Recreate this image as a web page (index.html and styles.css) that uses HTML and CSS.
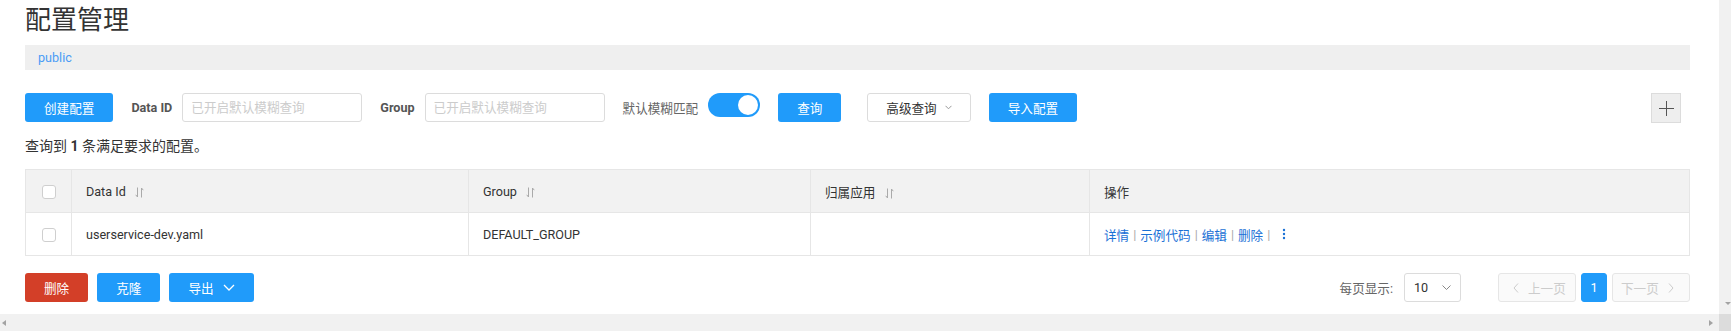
FILE: index.html
```html
<!DOCTYPE html>
<html lang="zh-CN">
<head>
    <meta charset="UTF-8">
    <meta name="viewport" content="width=device-width, initial-scale=1.0">
    <title>配置管理</title>
    <link rel="stylesheet" href="styles.css">
</head>
<body>
    <div class="window">
        <div class="window-main">
            <div class="page">
                <h1 class="page-title">配置管理</h1>
                <div class="namespace-bar">
                    <a class="namespace-link">public</a>
                </div>

                <div class="toolbar">
                    <button class="btn btn-primary toolbar-item">创建配置</button>
                    <div class="form-item toolbar-item">
                        <label class="form-label">Data ID</label>
                        <input class="input" placeholder="已开启默认模糊查询">
                    </div>
                    <div class="form-item toolbar-item">
                        <label class="form-label">Group</label>
                        <input class="input" placeholder="已开启默认模糊查询">
                    </div>
                    <div class="form-item toolbar-item">
                        <span class="form-label form-label-light">默认模糊匹配</span>
                        <div class="switch"><span class="switch-knob"></span></div>
                    </div>
                    <button class="btn btn-primary toolbar-item toolbar-item-wide">查询</button>
                    <button class="btn btn-normal toolbar-item">高级查询
                        <svg class="chevron-small" width="7" height="5" viewBox="0 0 7 5"><path d="M0.5 0.8l3 3 3-3" fill="none" stroke="#999"/></svg>
                    </button>
                    <button class="btn btn-primary toolbar-item">导入配置</button>
                    <div class="add-box">
                        <svg width="15" height="15" viewBox="0 0 15 15"><path d="M7.5 0v15M0 7.5h15" stroke="#555" stroke-width="1"/></svg>
                    </div>
                </div>

                <p class="summary">查询到 <strong>1</strong> 条满足要求的配置。</p>

                <table class="config-table">
                    <colgroup>
                        <col style="width: 46px">
                        <col style="width: 397px">
                        <col style="width: 342px">
                        <col style="width: 279px">
                        <col>
                    </colgroup>
                    <thead>
                        <tr>
                            <th class="cell-check"><span class="checkbox"></span></th>
                            <th>Data Id
                                <svg class="sort-icon" width="9" height="11" viewBox="0 0 9 11"><path d="M2.5 0.5v9.5L0.7 7.8M6.5 10.5V1l1.8 2.2" fill="none" stroke="#aaa"/></svg>
                            </th>
                            <th>Group
                                <svg class="sort-icon" width="9" height="11" viewBox="0 0 9 11"><path d="M2.5 0.5v9.5L0.7 7.8M6.5 10.5V1l1.8 2.2" fill="none" stroke="#aaa"/></svg>
                            </th>
                            <th>归属应用
                                <svg class="sort-icon" width="9" height="11" viewBox="0 0 9 11"><path d="M2.5 0.5v9.5L0.7 7.8M6.5 10.5V1l1.8 2.2" fill="none" stroke="#aaa"/></svg>
                            </th>
                            <th>操作</th>
                        </tr>
                    </thead>
                    <tbody>
                        <tr>
                            <td class="cell-check"><span class="checkbox"></span></td>
                            <td>userservice-dev.yaml</td>
                            <td>DEFAULT_GROUP</td>
                            <td></td>
                            <td>
                                <div class="actions">
                                    <a class="action-link">详情</a><span class="sep">|</span><a class="action-link">示例代码</a><span class="sep">|</span><a class="action-link">编辑</a><span class="sep">|</span><a class="action-link">删除</a><span class="sep">|</span>
                                    <svg class="more-icon" width="4" height="12" viewBox="0 0 4 12"><circle cx="2" cy="2" r="1.2"/><circle cx="2" cy="6" r="1.2"/><circle cx="2" cy="10" r="1.2"/></svg>
                                </div>
                            </td>
                        </tr>
                    </tbody>
                </table>

                <div class="footer-bar">
                    <div class="batch-actions">
                        <button class="btn btn-danger">删除</button>
                        <button class="btn btn-primary">克隆</button>
                        <button class="btn btn-primary btn-export">导出
                            <svg width="12" height="7" viewBox="0 0 12 7"><path d="M1 1l5 5 5-5" fill="none" stroke="#fff" stroke-width="1.3"/></svg>
                        </button>
                    </div>
                    <div class="pagination">
                        <span class="page-size-label">每页显示:</span>
                        <div class="select">
                            <span>10</span>
                            <svg width="9" height="5" viewBox="0 0 9 5"><path d="M0.5 0.5l4 4 4-4" fill="none" stroke="#888"/></svg>
                        </div>
                        <div class="pager">
                            <button class="pager-btn pager-prev" disabled>
                                <svg width="6" height="10" viewBox="0 0 6 10"><path d="M5 0.5L1 5l4 4.5" fill="none" stroke="#ccc"/></svg>
                                <span>上一页</span>
                            </button>
                            <button class="pager-btn pager-current">1</button>
                            <button class="pager-btn pager-next" disabled>
                                <span>下一页</span>
                                <svg width="6" height="10" viewBox="0 0 6 10"><path d="M1 0.5L5 5l-4 4.5" fill="none" stroke="#ccc"/></svg>
                            </button>
                        </div>
                    </div>
                </div>
            </div>
            <div class="v-scroll">
                <span class="arrow-down"></span>
            </div>
        </div>
        <div class="h-scroll-row">
            <div class="h-scroll">
                <span class="arrow-left"></span>
                <span class="arrow-right"></span>
            </div>
            <div class="scroll-corner"></div>
        </div>
    </div>
</body>
</html>
```

FILE: styles.css
```css
:root {
    --primary-color: #209bfa;
    --danger-color: #d33f28;
    --text-color: #333;
    --muted-color: #666;
    --border-color: #dcdcdc;
    --table-border: #e6e6e6;
    --link-color: #1a71d6;
    --scroll-track: #f1f1f1;
}

* {
    margin: 0;
    padding: 0;
    box-sizing: border-box;
}

html,
body {
    width: 100%;
    height: 100%;
    overflow: hidden;
}

body {
    font-family: Roboto, "Noto Sans CJK SC", sans-serif;
    font-size: 12.6px;
    color: var(--text-color);
    background: #fff;
}

/* Window frame with scrollbars */
.window {
    display: flex;
    flex-direction: column;
    height: 335px;
}

.window-main {
    display: flex;
    height: 314px;
}

.page {
    width: 1719px;
    flex-shrink: 0;
    padding: 0 29px 0 25px;
    overflow: hidden;
}

.v-scroll {
    flex: 1;
    background: var(--scroll-track);
    display: flex;
    align-items: flex-end;
    padding: 0 0 9px 6px;
}

.arrow-down {
    width: 0;
    height: 0;
    border-left: 3px solid transparent;
    border-right: 3px solid transparent;
    border-top: 3px solid #a3a3a3;
}

.h-scroll-row {
    display: flex;
    height: 17px;
}

.h-scroll {
    width: 1719px;
    background: var(--scroll-track);
    display: flex;
    align-items: center;
    justify-content: space-between;
    padding: 0 6px 0 2px;
}

.arrow-left {
    width: 0;
    height: 0;
    border-top: 3px solid transparent;
    border-bottom: 3px solid transparent;
    border-right: 4px solid #a3a3a3;
}

.arrow-right {
    width: 0;
    height: 0;
    border-top: 3px solid transparent;
    border-bottom: 3px solid transparent;
    border-left: 4px solid #a3a3a3;
}

.scroll-corner {
    flex: 1;
    background: #dcdcdc;
}

/* Header */
.page-title {
    margin-top: 5px;
    height: 30px;
    line-height: 30px;
    font-size: 26px;
    font-weight: 400;
    color: var(--text-color);
}

.namespace-bar {
    margin-top: 10px;
    height: 25px;
    line-height: 25px;
    background: #efefef;
    padding-left: 13px;
}

.namespace-link {
    color: #4a9cf6;
    cursor: pointer;
}

/* Toolbar */
.toolbar {
    margin-top: 23px;
    height: 30px;
    display: flex;
    align-items: flex-start;
}

.toolbar-item {
    margin-right: 18px;
}

.toolbar-item-wide {
    margin-right: 26px;
}

.form-item {
    display: flex;
    align-items: center;
    height: 29px;
}

.form-label {
    margin-right: 10px;
    font-weight: 700;
    color: #555;
    white-space: nowrap;
}

.form-label-light {
    font-weight: 400;
    color: var(--muted-color);
}

.input {
    width: 180px;
    height: 29px;
    border: 1px solid var(--border-color);
    border-radius: 3px;
    padding: 0 8px;
    font-family: inherit;
    font-size: 12.6px;
    color: var(--text-color);
    outline: none;
}

.input::placeholder {
    color: #ccc;
}

.switch {
    width: 52px;
    height: 24px;
    border-radius: 12px;
    background: var(--primary-color);
    display: flex;
    justify-content: flex-end;
    align-items: center;
    padding: 2px;
    align-self: flex-start;
}

.switch-knob {
    width: 20px;
    height: 20px;
    border-radius: 50%;
    background: #fff;
}

.btn {
    height: 29px;
    padding: 0 18px;
    border: 1px solid transparent;
    border-radius: 3px;
    font-family: inherit;
    font-size: 12.6px;
    display: inline-flex;
    align-items: center;
    gap: 8px;
    cursor: pointer;
    flex-shrink: 0;
    white-space: nowrap;
}

.btn-primary {
    background: var(--primary-color);
    color: #fff;
}

.btn-normal {
    background: #fff;
    border-color: var(--border-color);
    color: var(--text-color);
}

.btn-danger {
    background: var(--danger-color);
    color: #fff;
}

.btn-export {
    gap: 9px;
}

.add-box {
    margin-left: auto;
    margin-right: 9px;
    width: 30px;
    height: 30px;
    background: #eee;
    border: 1px solid var(--border-color);
    display: flex;
    justify-content: center;
    align-items: center;
}

.summary {
    margin: 13px 0;
    font-size: 14px;
    line-height: 20px;
    color: var(--text-color);
}

.summary strong {
    font-weight: 700;
}

/* Table */
.config-table {
    width: 100%;
    border-collapse: collapse;
    table-layout: fixed;
}

.config-table th,
.config-table td {
    border: 1px solid var(--table-border);
    padding: 0 14px;
    text-align: left;
    font-weight: 400;
    white-space: nowrap;
}

.config-table th {
    height: 43px;
    background: #f2f2f2;
}

.config-table td {
    height: 43px;
}

.config-table .cell-check {
    padding: 0;
    text-align: center;
}

.checkbox {
    display: inline-block;
    width: 14px;
    height: 14px;
    border: 1px solid #cfcfcf;
    border-radius: 3px;
    background: #fff;
    vertical-align: middle;
}

.sort-icon {
    margin-left: 6px;
    vertical-align: middle;
}

.actions {
    display: flex;
    align-items: center;
}

.action-link {
    color: var(--link-color);
    cursor: pointer;
}

.sep {
    color: #aaa;
    margin: 0 4px;
}

.more-icon {
    fill: var(--link-color);
    margin-left: 8px;
}

/* Footer */
.footer-bar {
    margin-top: 17px;
    height: 29px;
    display: flex;
    align-items: center;
}

.batch-actions {
    display: flex;
    gap: 9px;
}

.pagination {
    margin-left: auto;
    display: flex;
    align-items: center;
}

.page-size-label {
    color: var(--muted-color);
    margin-right: 11px;
}

.select {
    width: 57px;
    height: 29px;
    border: 1px solid var(--border-color);
    border-radius: 3px;
    padding: 0 9px;
    display: flex;
    align-items: center;
    justify-content: space-between;
    margin-right: 37px;
}

.pager {
    display: flex;
    gap: 5px;
}

.pager-btn {
    height: 29px;
    border: 1px solid var(--table-border);
    border-radius: 3px;
    background: #fafafa;
    color: #ccc;
    font-family: inherit;
    font-size: 12.6px;
    display: flex;
    align-items: center;
    gap: 9px;
    white-space: nowrap;
}

.pager-btn svg {
    flex-shrink: 0;
}

.pager-prev {
    width: 78px;
    padding: 0 8px 0 14px;
}

.pager-next {
    width: 78px;
    padding: 0 14px 0 8px;
}

.pager-current {
    width: 26px;
    justify-content: center;
    background: var(--primary-color);
    border-color: var(--primary-color);
    color: #fff;
}
```
